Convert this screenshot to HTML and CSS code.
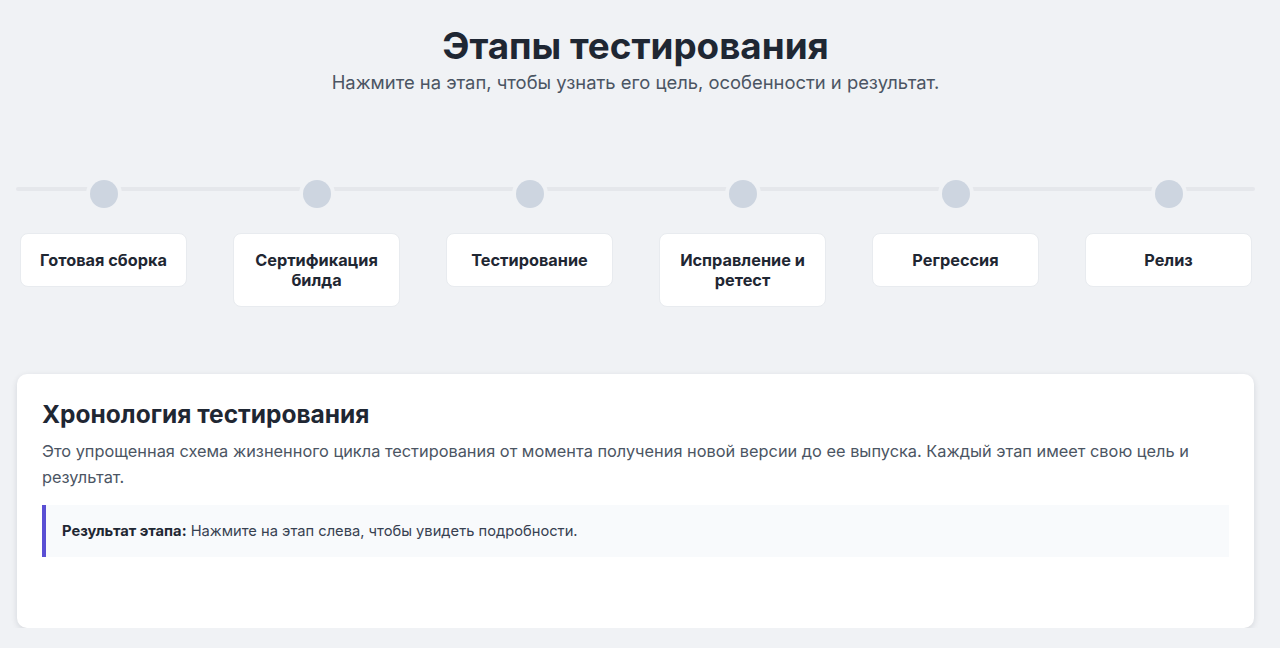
FILE: index.html
```html
<!DOCTYPE html>
<html lang="ru">
<head>
<meta charset="utf-8">
<title>Этапы тестирования</title>
<link rel="stylesheet" href="styles.css">
</head>
<body>
<div class="page">
  <header class="head">
    <h1 class="title">Этапы тестирования</h1>
    <p class="subtitle">Нажмите на этап, чтобы узнать его цель, особенности и результат.</p>
  </header>

  <section class="timeline">
    <div class="step"><span class="dot"></span><button class="card">Готовая сборка</button></div>
    <div class="step"><span class="dot"></span><button class="card">Сертификация билда</button></div>
    <div class="step"><span class="dot"></span><button class="card">Тестирование</button></div>
    <div class="step"><span class="dot"></span><button class="card">Исправление и ретест</button></div>
    <div class="step"><span class="dot"></span><button class="card">Регрессия</button></div>
    <div class="step"><span class="dot"></span><button class="card">Релиз</button></div>
  </section>

  <section class="panel">
    <h2 class="panel-title">Хронология тестирования</h2>
    <p class="panel-text">Это упрощенная схема жизненного цикла тестирования от момента получения новой версии до ее выпуска. Каждый этап имеет свою цель и результат.</p>
    <div class="result"><strong>Результат этапа:</strong> Нажмите на этап слева, чтобы увидеть подробности.</div>
  </section>
</div>
</body>
</html>
```

FILE: styles.css
```css
* { box-sizing: border-box; }
html, body { margin: 0; padding: 0; }
body {
  background: #f0f2f5;
  font-family: Inter, "Noto Sans", "Liberation Sans", sans-serif;
  color: #1f2937;
}
.page {
  padding: 26px 25px 0 16px;
}
.head { text-align: center; }
.title {
  margin: 0;
  font-size: 36.8px;
  line-height: 40px;
  font-weight: 700;
  color: #1f2733;
}
.subtitle {
  margin: 2px 0 0;
  font-size: 18.4px;
  line-height: 28px;
  color: #4b5563;
}
.timeline {
  position: relative;
  display: flex;
  justify-content: space-between;
  align-items: flex-start;
  padding: 0 3px 0 4px;
  margin-top: 84px;
}
.timeline::before {
  content: "";
  position: absolute;
  left: 0;
  right: 0;
  top: 7px;
  height: 4px;
  border-radius: 2px;
  background: #e5e7eb;
}
.step {
  position: relative;
  width: 167px;
  display: flex;
  flex-direction: column;
  align-items: center;
}
.dot {
  width: 28px;
  height: 28px;
  border-radius: 50%;
  background: #cdd5e0;
  box-shadow: 0 0 0 4px #f0f2f5;
}
.card {
  margin-top: 25px;
  width: 167px;
  padding: 16px 12px;
  background: #ffffff;
  border: 1px solid #e8ebef;
  border-radius: 8px;
  font-family: inherit;
  font-size: 16.3px;
  line-height: 20px;
  font-weight: 700;
  color: #1f2733;
  text-align: center;
  cursor: pointer;
}
.panel {
  margin: 67px 1px 0;
  min-height: 254px;
  background: #ffffff;
  border-radius: 10px;
  box-shadow: 0 2px 6px rgba(15, 23, 42, 0.12);
  padding: 26px 25px 24px;
}
.panel-title {
  margin: 0;
  font-size: 24.5px;
  line-height: 28px;
  font-weight: 700;
  color: #1f2733;
}
.panel-text {
  margin: 10px 0 0;
  font-size: 16.35px;
  line-height: 26px;
  color: #4b5563;
}
.result {
  margin-top: 15px;
  padding: 16px 16px;
  background: #f8fafc;
  border-left: 4px solid #5a4fd4;
  font-size: 14.7px;
  line-height: 20px;
  color: #374151;
}
.result strong { color: #1f2733; font-weight: 700; }
```
